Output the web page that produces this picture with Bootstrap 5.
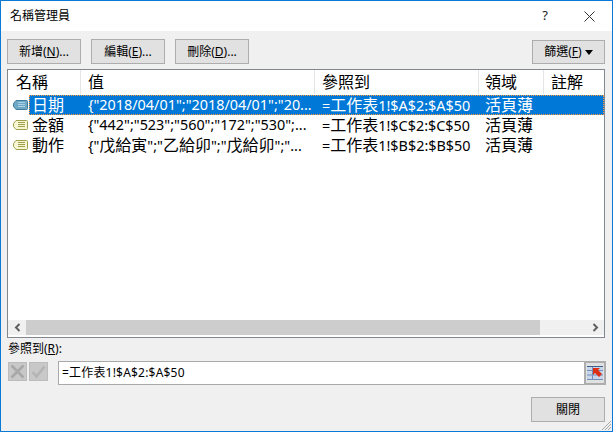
<!DOCTYPE html>
<html lang="zh-Hant">
<head>
<meta charset="utf-8">
<title>名稱管理員</title>
<link href="https://cdn.jsdelivr.net/npm/bootstrap@5.3.0/dist/css/bootstrap.min.css" rel="stylesheet">
<style>
html,body{margin:0;height:100%;overflow:hidden;background:#f0f0f0}
body{font-family:"Noto Sans","Noto Sans CJK TC",sans-serif;font-size:12px;color:#000;line-height:1.2}
.dlg{width:613px;height:432px;border:1px solid #0a7ad6;background:#f0f0f0;position:relative;overflow:hidden}
.ttl{height:30px;background:#fff;padding:0 9px;font-size:12px}
.ctl-q{font-size:13px;width:16px;text-align:center;margin-right:31px;color:#222}
.tools{height:38px;padding:8px 7px 0 6px}
.wbtn{height:25px;width:74px;border:1px solid #adadad;border-radius:0;background:#e1e1e1;color:#000;font-size:12px;padding:0;line-height:1;--bs-btn-hover-bg:#e1e1e1}
.wbtn u{text-underline-offset:1px}
.gapb{margin-left:10px}
.filt{width:73px;height:24px;margin-top:1px}
.lst{margin:0 7px 0 6px;height:269px;border:1px solid #828790;background:#fff}
.hdr{height:25px;font-size:16px}
.hc,.rc{flex:none;white-space:nowrap}
.hc{border-right:1px solid #e5e5e5;height:24px;padding:1px 0 0 7px;line-height:22px}
.hc:last-child{border:0}
.w1{width:73px}.w2{width:234px}.w3{width:164px}.w4{width:65px}.w5{width:60px}
.hc.w1{padding-left:8px}
.hc.w3{padding-left:7px}
.hc.w4{padding-left:6px}
.rws{height:225px}
.rwb{position:relative}
.rw{height:20px;font-size:16px}
.rc{height:20px;line-height:20px;padding-left:7px}
.rc.w2,.rc.w3{font-size:14.4px}
.rc.w3{padding-left:7px}
.rc.w4{padding-left:6px}
.rc .cj{font-size:16px}
.rc.nm{padding-left:24px}
.rw.sel{margin-left:21px;background:#0078d7;color:#fff;outline:1px dotted #ff9a3c;outline-offset:-1px}
.sel .rc.nm{width:52px;padding-left:3px}
.nico{position:absolute;left:5px;top:5px}
.scrb{height:15px;background:#f0f0f0}
.sarr{width:18px;height:15px;background:#f0f0f0}
.sthm{width:514px;height:15px;background:#cdcdcd}
.lbl{height:23px;padding:4px 0 0 7px;font-size:12px}
.refr{height:24px;padding:0 6px 0 7px}
.sq{width:19px;height:19px;background:#c8c8c8;border:1px solid #bcbcbc;margin:1px 2px 0 0}
.inp{margin-left:8px;width:527px;height:24px;border:1px solid #a9a9a9;border-right:0;background:#fff;padding-left:3px;font-size:12px;line-height:22px;letter-spacing:.2px}
.pick{width:22px;height:24px;background:#e1e1e1;border:2px solid #adadad}
.ftr{padding:12px 7px 0 0}
.grip{position:absolute;right:0;bottom:0}
</style>
</head>
<body>
<div class="dlg">
  <div class="ttl d-flex align-items-center justify-content-between">
    <span>名稱管理員</span>
    <span class="d-flex align-items-center">
      <span class="ctl-q">?</span>
      <svg width="11" height="11" viewBox="0 0 11 11" class="me-2"><path d="M.5.5l10 10M10.5.5l-10 10" stroke="#333" fill="none"/></svg>
    </span>
  </div>
  <div class="tools d-flex align-items-start">
    <button class="btn wbtn" type="button">新增(<u>N</u>)...</button>
    <button class="btn wbtn gapb" type="button">編輯(<u>E</u>)...</button>
    <button class="btn wbtn gapb" type="button">刪除(<u>D</u>)...</button>
    <button class="btn wbtn filt ms-auto" type="button">篩選(<u>F</u>) <svg width="8" height="5" viewBox="0 0 8 5"><path d="M0 0h8L4 5z" fill="#000"/></svg></button>
  </div>
  <div class="lst">
    <div class="hdr d-flex">
      <div class="hc w1">名稱</div><div class="hc w2">值</div><div class="hc w3">參照到</div><div class="hc w4">領域</div><div class="hc w5">註解</div>
    </div>
    <div class="rws">
      <div class="rwb">
        <svg class="nico" width="15" height="10" viewBox="0 0 15 10"><path d="M3 .5h10.500q1 0 1 1v7q0 1-1 1H3L.5 6.500v-3z" fill="#6fa8c4" stroke="#3f7d9c"/><path d="M5 2.500h7M5 4.500h7M5 6.500h7" stroke="#a9d2e6"/></svg>
        <div class="rw sel d-flex"><div class="rc w1 nm">日期</div><div class="rc w2">{"2018/04/01";"2018/04/01";"20...</div><div class="rc w3">=<span class="cj">工作表</span>1!$A$2:$A$50</div><div class="rc w4">活頁薄</div></div>
      </div>
      <div class="rwb">
        <svg class="nico" width="15" height="10" viewBox="0 0 15 10"><path d="M3 .5h10.500q1 0 1 1v7q0 1-1 1H3L.5 6.500v-3z" fill="#f6f5d4" stroke="#a0a04a"/><path d="M5 2.500h7M5 4.500h7M5 6.500h7" stroke="#a0a04a"/></svg>
        <div class="rw d-flex"><div class="rc w1 nm">金額</div><div class="rc w2">{"442";"523";"560";"172";"530";...</div><div class="rc w3">=<span class="cj">工作表</span>1!$C$2:$C$50</div><div class="rc w4">活頁薄</div></div>
      </div>
      <div class="rwb">
        <svg class="nico" width="15" height="10" viewBox="0 0 15 10"><path d="M3 .5h10.500q1 0 1 1v7q0 1-1 1H3L.5 6.500v-3z" fill="#f6f5d4" stroke="#a0a04a"/><path d="M5 2.500h7M5 4.500h7M5 6.500h7" stroke="#a0a04a"/></svg>
        <div class="rw d-flex"><div class="rc w1 nm">動作</div><div class="rc w2">{"<span class="cj">戊給寅</span>";"<span class="cj">乙給卯</span>";"<span class="cj">戊給卯</span>";"...</div><div class="rc w3">=<span class="cj">工作表</span>1!$B$2:$B$50</div><div class="rc w4">活頁薄</div></div>
      </div>
    </div>
    <div class="scrb d-flex">
      <div class="sarr d-flex align-items-center justify-content-center"><svg width="7" height="9" viewBox="0 0 7 9"><path d="M5.500 1L2 4.500 5.500 8" stroke="#606060" stroke-width="2" fill="none"/></svg></div>
      <div class="sthm"></div>
      <div class="flex-grow-1"></div>
      <div class="sarr d-flex align-items-center justify-content-center"><svg width="7" height="9" viewBox="0 0 7 9"><path d="M1.500 1L5 4.500 1.500 8" stroke="#606060" stroke-width="2" fill="none"/></svg></div>
    </div>
  </div>
  <div class="lbl">參照到(<u>R</u>):</div>
  <div class="refr d-flex align-items-start">
    <div class="sq d-flex align-items-center justify-content-center"><svg width="15" height="15" viewBox="0 0 15 15"><path d="M1.500 1.500l12 12M13.500 1.500l-12 12" stroke="#a8a8a8" stroke-width="2.600"/></svg></div>
    <div class="sq d-flex align-items-center justify-content-center"><svg width="15" height="15" viewBox="0 0 15 15"><path d="M1.500 8l4 4.500 8-10" stroke="#b4b4b4" stroke-width="2.600" fill="none"/></svg></div>
    <div class="inp">=工作表1!$A$2:$A$50</div>
    <div class="pick d-flex align-items-center justify-content-center"><svg width="16" height="14" viewBox="0 0 16 14"><rect width="16" height="14" fill="#c9d6ea"/><path d="M0 .5h16" stroke="#3f5f8f"/><path d="M0 4.500h16M0 9h16M0 13.500h16M5.500 1v13" stroke="#6f8fbd"/><path d="M6 2h7l-2 2 4 4-3 3-4-4-2 2z" fill="#dc2f16"/></svg></div>
  </div>
  <div class="ftr d-flex justify-content-end"><button class="btn wbtn" type="button">關閉</button></div>
  <svg class="grip" width="11" height="11" viewBox="0 0 11 11"><path d="M10 1L1 10M10 4L4 10M10 7L7 10" stroke="#a8a8a8"/></svg>
</div>
<script src="https://cdn.jsdelivr.net/npm/bootstrap@5.3.0/dist/js/bootstrap.bundle.min.js"></script>
</body>
</html>
